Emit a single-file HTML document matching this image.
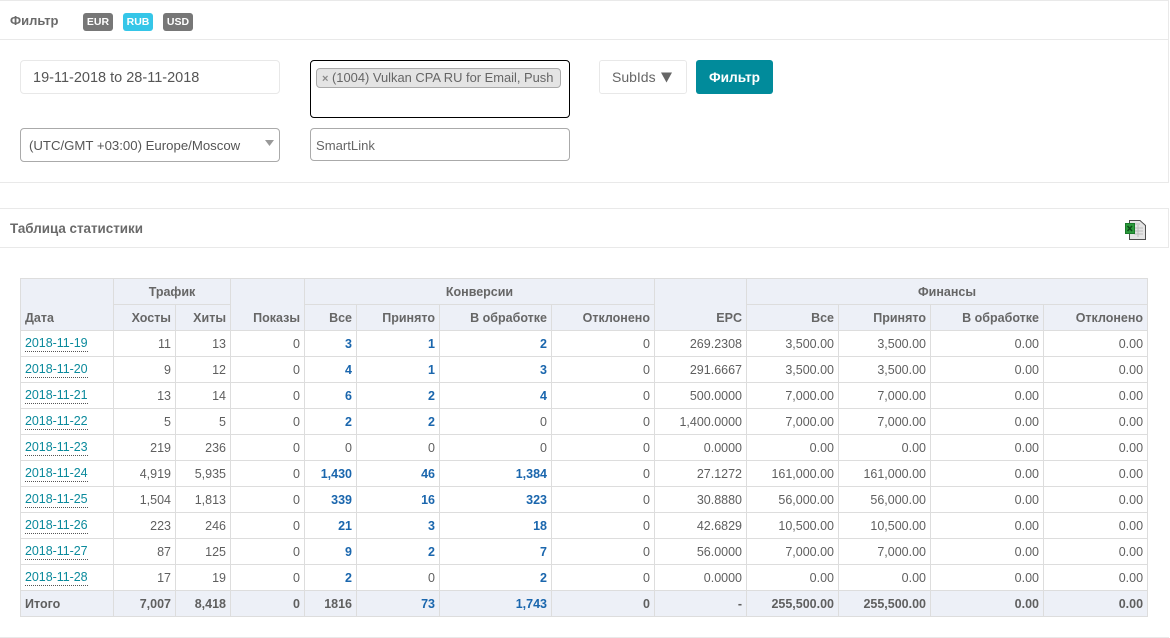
<!DOCTYPE html>
<html><head><meta charset="utf-8"><style>
*{box-sizing:border-box}
html,body{margin:0;padding:0;width:1170px;height:638px;overflow:hidden;background:#fff;font-family:"Liberation Sans",sans-serif;color:#666;font-size:12.5px}
.a{position:absolute}
.ln{position:absolute;background:#e9e9e9;height:1px;left:0;width:1169px}
.b{position:absolute;top:13px;width:30px;height:18px;border-radius:3px;background:#777;color:#fff;font-weight:bold;font-size:10.5px;line-height:18px;text-align:center}
table{position:absolute;left:20px;top:278px;width:1128px;border-collapse:collapse;table-layout:fixed}
td,th{border:1px solid #ddd;padding:0 4px;height:26px;text-align:right;font-size:12.5px;line-height:14px;white-space:nowrap;overflow:hidden;color:#5f5f5f}
th{background:#edf0f7;font-weight:bold;color:#666;vertical-align:middle}
th.c{text-align:center}th.l,td.l{text-align:left}
td.l{padding-left:4px}
td.l span{color:#0b8a9c;border-bottom:1px dotted #555;display:inline-block;line-height:15px;letter-spacing:-.05px}
td.n{color:#1a66ad;font-weight:bold}
tr.t td{background:#edf0f7;font-weight:bold}
tr.t td.n{color:#1a66ad}
</style></head><body>
<div class="ln" style="top:0"></div>
<div class="ln" style="top:39px"></div>
<div class="ln" style="top:182px"></div>
<div class="ln" style="top:208px"></div>
<div class="ln" style="top:247px"></div>
<div class="ln" style="top:637px"></div>
<div class="a" style="left:1168px;top:0;width:1px;height:183px;background:#e9e9e9"></div>
<div class="a" style="left:1168px;top:208px;width:1px;height:40px;background:#e9e9e9"></div>
<div class="a" style="left:10px;top:13px;font-weight:bold;font-size:13px;line-height:16px;color:#6a6a6a">Фильтр</div>
<div class="b" style="left:83px">EUR</div>
<div class="b" style="left:123px;background:#35c6e8">RUB</div>
<div class="b" style="left:163px">USD</div>

<div class="a" style="left:20px;top:60px;width:260px;height:34px;border:1px solid #e8e8e8;border-radius:4px;padding-left:12px;line-height:34px;font-size:14.5px;color:#555">19-11-2018 to 28-11-2018</div>
<div class="a" style="left:310px;top:60px;width:260px;height:58px;border:1px solid #000;border-radius:4px"></div>
<div class="a" style="left:316px;top:68px;width:245px;height:20px;background:#e4e4e4;border:1px solid #aaa;border-radius:4px;line-height:18px;font-size:12.9px;color:#666;padding-left:5px;white-space:nowrap;overflow:hidden"><span style="font-size:11px;font-weight:bold;color:#888">×</span> (1004) Vulkan CPA RU for Email, Push</div>
<div class="a" style="left:599px;top:60px;width:88px;height:34px;border:1px solid #e8e8e8;border-radius:3px;line-height:32px;font-size:14px;padding-left:12px;color:#666">SubIds<svg width="11" height="11" viewBox="0 0 12 11" style="vertical-align:-0.500px;margin-left:5px"><path d="M0 0H12L6 11Z" fill="#666"/></svg></div>
<div class="a" style="left:696px;top:60px;width:77px;height:34px;background:#018b9b;border-radius:3px;color:#fff;font-weight:bold;font-size:13.7px;line-height:35px;text-align:center">Фильтр</div>
<div class="a" style="left:20px;top:128px;width:260px;height:34px;border:1px solid #aaa;border-radius:4px;padding-left:8px;line-height:33px;font-size:13.2px;color:#555">(UTC/GMT +03:00) Europe/Moscow</div>
<svg class="a" style="left:265px;top:140px" width="9" height="6"><path d="M0 0H9L4.500 6Z" fill="#999"/></svg>
<div class="a" style="left:310px;top:128px;width:260px;height:33px;border:1px solid #aaa;border-radius:4px;padding-left:5px;line-height:33px;font-size:13.1px;color:#666">SmartLink</div>

<div class="a" style="left:10px;top:221px;font-weight:bold;font-size:13.400px;line-height:16px;color:#6a6a6a">Таблица статистики</div>
<svg class="a" style="left:1125px;top:219px" width="22" height="22" viewBox="0 0 22 22">
<path d="M4.500 1.500H15L20.500 6.500V20.500H4.500Z" fill="#e4e4e4" stroke="#4f4f4f"/>
<path d="M9 5H15M9 9H18M9 12H18M9 15H18M13 6V18" stroke="#bdbdbd"/>
<rect x="0.500" y="4.500" width="9" height="10" fill="#2c9a3c" stroke="#1a7a2a"/>
<path d="M2.500 7L7 12M7 7L2.500 12" stroke="#0d4d18" stroke-width="1.500"/>
</svg>

<table>
<colgroup><col style="width:93px"><col style="width:62px"><col style="width:55px"><col style="width:74px"><col style="width:52px"><col style="width:83px"><col style="width:112px"><col style="width:103px"><col style="width:92px"><col style="width:92px"><col style="width:92px"><col style="width:113px"><col style="width:104px"></colgroup>
<tr><th rowspan="2" class="l" style="vertical-align:bottom;padding-bottom:5px">Дата</th><th colspan="2" class="c">Трафик</th><th rowspan="2" style="vertical-align:bottom;padding-bottom:5px">Показы</th><th colspan="4" class="c">Конверсии</th><th rowspan="2" style="vertical-align:bottom;padding-bottom:5px">EPC</th><th colspan="4" class="c">Финансы</th></tr>
<tr><th>Хосты</th><th>Хиты</th><th>Все</th><th>Принято</th><th>В обработке</th><th>Отклонено</th><th>Все</th><th>Принято</th><th>В обработке</th><th>Отклонено</th></tr>
<tr><td class="l"><span>2018-11-19</span></td><td>11</td><td>13</td><td>0</td><td class="n">3</td><td class="n">1</td><td class="n">2</td><td>0</td><td>269.2308</td><td>3,500.00</td><td>3,500.00</td><td>0.00</td><td>0.00</td></tr>
<tr><td class="l"><span>2018-11-20</span></td><td>9</td><td>12</td><td>0</td><td class="n">4</td><td class="n">1</td><td class="n">3</td><td>0</td><td>291.6667</td><td>3,500.00</td><td>3,500.00</td><td>0.00</td><td>0.00</td></tr>
<tr><td class="l"><span>2018-11-21</span></td><td>13</td><td>14</td><td>0</td><td class="n">6</td><td class="n">2</td><td class="n">4</td><td>0</td><td>500.0000</td><td>7,000.00</td><td>7,000.00</td><td>0.00</td><td>0.00</td></tr>
<tr><td class="l"><span>2018-11-22</span></td><td>5</td><td>5</td><td>0</td><td class="n">2</td><td class="n">2</td><td>0</td><td>0</td><td>1,400.0000</td><td>7,000.00</td><td>7,000.00</td><td>0.00</td><td>0.00</td></tr>
<tr><td class="l"><span>2018-11-23</span></td><td>219</td><td>236</td><td>0</td><td>0</td><td>0</td><td>0</td><td>0</td><td>0.0000</td><td>0.00</td><td>0.00</td><td>0.00</td><td>0.00</td></tr>
<tr><td class="l"><span>2018-11-24</span></td><td>4,919</td><td>5,935</td><td>0</td><td class="n">1,430</td><td class="n">46</td><td class="n">1,384</td><td>0</td><td>27.1272</td><td>161,000.00</td><td>161,000.00</td><td>0.00</td><td>0.00</td></tr>
<tr><td class="l"><span>2018-11-25</span></td><td>1,504</td><td>1,813</td><td>0</td><td class="n">339</td><td class="n">16</td><td class="n">323</td><td>0</td><td>30.8880</td><td>56,000.00</td><td>56,000.00</td><td>0.00</td><td>0.00</td></tr>
<tr><td class="l"><span>2018-11-26</span></td><td>223</td><td>246</td><td>0</td><td class="n">21</td><td class="n">3</td><td class="n">18</td><td>0</td><td>42.6829</td><td>10,500.00</td><td>10,500.00</td><td>0.00</td><td>0.00</td></tr>
<tr><td class="l"><span>2018-11-27</span></td><td>87</td><td>125</td><td>0</td><td class="n">9</td><td class="n">2</td><td class="n">7</td><td>0</td><td>56.0000</td><td>7,000.00</td><td>7,000.00</td><td>0.00</td><td>0.00</td></tr>
<tr><td class="l"><span>2018-11-28</span></td><td>17</td><td>19</td><td>0</td><td class="n">2</td><td>0</td><td class="n">2</td><td>0</td><td>0.0000</td><td>0.00</td><td>0.00</td><td>0.00</td><td>0.00</td></tr>
<tr class="t"><td class="l">Итого</td><td>7,007</td><td>8,418</td><td>0</td><td>1816</td><td class="n">73</td><td class="n">1,743</td><td>0</td><td>-</td><td>255,500.00</td><td>255,500.00</td><td>0.00</td><td>0.00</td></tr>
</table>
</body></html>
